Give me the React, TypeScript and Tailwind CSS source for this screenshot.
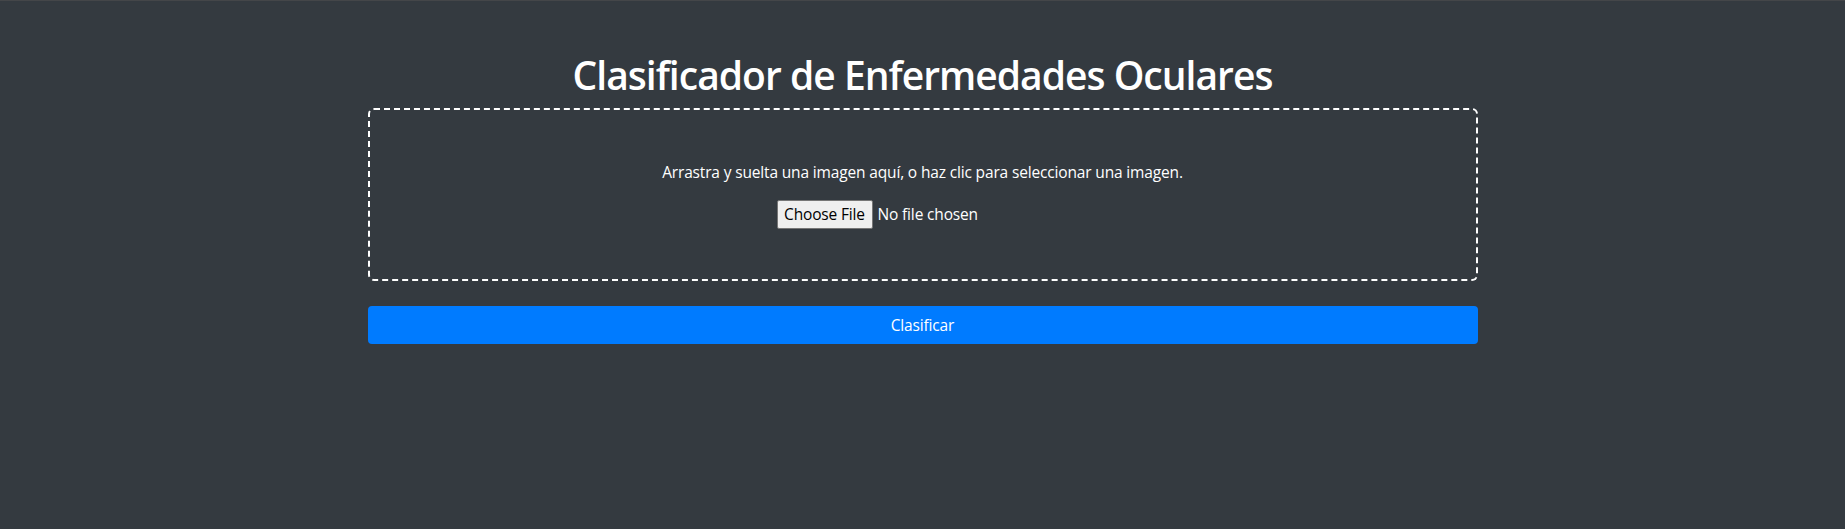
import React from 'react';

const FONT = "font-['Segoe_UI','Open_Sans','Noto_Sans',sans-serif]";
const BODY = 'text-[15.5px] tracking-[-0.01em]';

const FileDrop: React.FC = () => (
  <div className="rounded-[6px] border-2 border-dashed border-white px-[50px] py-[50px] text-center">
    <p className={`mb-4 leading-6 text-white ${BODY}`}>
      Arrastra y suelta una imagen aquí, o haz clic para seleccionar una imagen.
    </p>
    <div className="mx-auto flex h-[29px] w-[292px] items-center">
      <span className={`flex h-[29px] w-[96px] items-center justify-center rounded-[2px] border border-[#767676] bg-[#efefef] text-black ${BODY}`}>
        Choose File
      </span>
      <span className={`ml-[5px] text-white ${BODY}`}>No file chosen</span>
    </div>
  </div>
);

const App: React.FC = () => {
  return (
    <div className={`min-h-screen border-t border-[#444649] bg-[#343a40] ${FONT} antialiased`}>
      <div className="mx-auto w-[1110px] pt-[50px]">
        <h1 className="mb-[9px] text-center text-[39px] leading-[48px] font-semibold tracking-[-0.025em] text-white">
          Clasificador de Enfermedades Oculares
        </h1>
        <FileDrop />
        <button className={`mt-[25px] block h-[38px] w-full rounded-[4px] bg-[#007bff] leading-6 text-white ${BODY}`}>
          Clasificar
        </button>
      </div>
    </div>
  );
};

export default App;
